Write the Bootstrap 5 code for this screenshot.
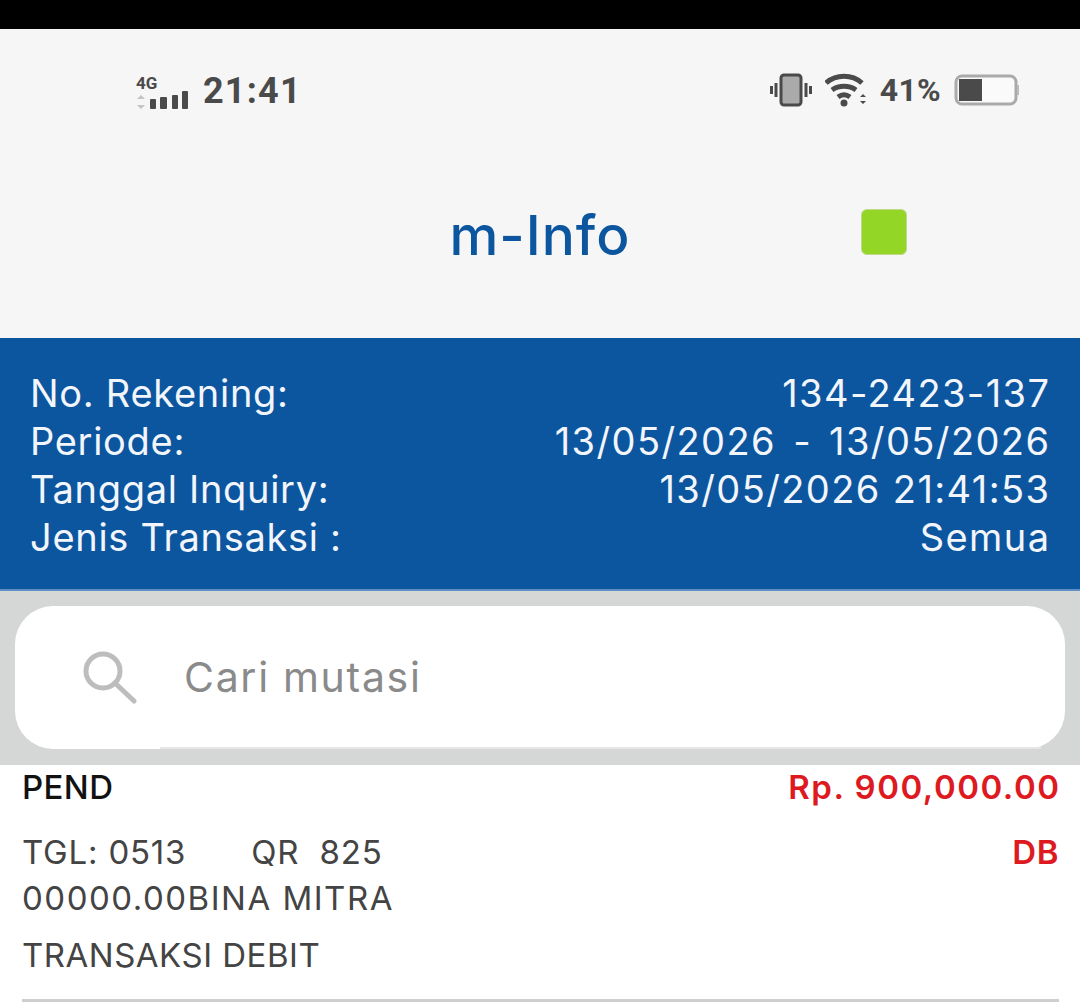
<!DOCTYPE html>
<html lang="id">
<head>
    <meta charset="UTF-8">
    <title>m-Info</title>
    <link href="https://cdn.jsdelivr.net/npm/bootstrap@5.3.2/dist/css/bootstrap.min.css" rel="stylesheet">
    <style>
        html, body { height: 1006px; overflow: hidden; }
        body { background: #fff; font-family: Inter, "Noto Sans", sans-serif; color: #333; }
        .top-strip { height: 29px; background: #000; }
        .app-head { height: 309px; background: #f6f6f6; }
        .status-row { height: 122px; padding: 42px 60px 0 135px; color: #4a4a4a; }
        .status-icons { gap: 13px; }
        .clock { font: 700 36px/38px Roboto, sans-serif; letter-spacing: 1.2px; margin-left: 14px; }
        .pct { font: 700 32px/38px Roboto, sans-serif; letter-spacing: .3px; }
        .net-label { font: 700 17px/17px Roboto, sans-serif; }
        .title-row { height: 168px; display: grid; grid-template-columns: 1fr auto 1fr; align-items: center; }
        .app-title { font: 500 55px/60px Inter, sans-serif; color: #0c569f; letter-spacing: 1px; }
        .green-dot { width: 46px; height: 46px; margin: -6px 0 0 231px; background: #93d626; border-radius: 6px; border: 1px solid #bcd98c; }
        .acct-panel { height: 253px; background: #0c559f; color: #f2f6fb; padding: 31px 31px 0; font-size: 38px; line-height: 48px; border-bottom: 2px solid #5c8fc4; }
        .acct-label { letter-spacing: .7px; margin-left: -1px; }
        .acct-value { letter-spacing: 1.4px; margin-right: -1.4px; }
        .acct-dash { margin: 0 5px; }
        .search-band { height: 174px; background: #d5d6d6; padding: 15px 15px 16px; }
        .search-box { height: 143px; background: #fff; border-radius: 38px; padding-left: 68px; position: relative; }
        .search-box::after { content: ""; position: absolute; left: 145px; right: 24px; bottom: 0; height: 2px; background: #e6e6e6; }
        .search-text { font-size: 41px; color: #8a8a8a; margin-left: 47px; line-height: 1; letter-spacing: 1.7px; }
        .trx-list { padding: 0 21px 0 22px; }
        .trx-top { height: 64px; padding-top: 2px; font-size: 33px; line-height: 40px; }
        .trx-name { color: #111; font-weight: 500; letter-spacing: .4px; }
        .trx-amount { color: #dd1a1f; font-weight: 600; letter-spacing: 1.5px; margin-right: -1.5px; }
        .trx-line { font-size: 33px; line-height: 46px; color: #444; }
        .trx-wide { letter-spacing: 1.5px; }
        .trx-tgl { letter-spacing: .8px; }
        .trx-db { color: #dd1a1f; font-weight: 600; letter-spacing: .6px; }
        .gap-tgl { margin-left: 65px; }
        .trx-note { font-size: 33px; line-height: 46px; color: #444; margin-top: 11px; padding-bottom: 21px; border-bottom: 3px solid #cfcfcf; letter-spacing: .5px; }
    </style>
</head>
<body>

<div class="top-strip"></div>

<!-- status + title -->
<header class="app-head">
    <div class="status-row d-flex justify-content-between align-items-start">
        <div class="d-flex align-items-center">
            <svg width="54" height="40" viewBox="0 -4 54 40" fill="#4a4a4a">
                <text class="net-label" x="1" y="14">4G</text>
                <path d="M6 20l4 4H2z M6 34l4-4H2z" fill="#c4c4c4"/>
                <rect x="15" y="24" width="6" height="10" rx="1"/>
                <rect x="25" y="22" width="7" height="12" rx="1"/>
                <rect x="37" y="20" width="6" height="14" rx="1"/>
                <rect x="47" y="16" width="6" height="18" rx="1"/>
            </svg>
            <span class="clock">21:41</span>
        </div>
        <div class="status-icons d-flex align-items-center">
            <svg width="42" height="34" viewBox="0 0 42 34" fill="none">
                <rect x="11" y="2" width="20" height="30" rx="3" fill="#aaa" stroke="#4a4a4a" stroke-width="3"/>
                <path d="M6 10v14M1.500 13v8M36 10v14M40.500 13v8" stroke="#4a4a4a" stroke-width="3"/>
            </svg>
            <svg width="42" height="34" viewBox="0 0 42 34" fill="none" stroke="#4a4a4a" stroke-width="5">
                <path d="M1 10c10-9 26-9 36 0M7 17c7-5 17-5 24 0M13 24c4-3 8-3 12 0"/>
                <circle cx="19" cy="30" r="3.500" fill="#4a4a4a" stroke="none"/>
                <path d="M38 21l3 3h-6zM38 31l3-3h-6z" fill="#4a4a4a" stroke="none"/>
            </svg>
            <span class="pct">41%</span>
            <svg width="66" height="34" viewBox="0 0 66 34" fill="none">
                <rect x="2" y="3" width="60" height="28" rx="6" fill="#fafafa" stroke="#aaa" stroke-width="3"/>
                <rect x="5" y="6" width="23" height="22" fill="#4a4a4a"/>
                <path d="M64 12v10" stroke="#bbb" stroke-width="2"/>
            </svg>
        </div>
    </div>
    <div class="title-row">
        <div></div>
        <div class="app-title">m-Info</div>
        <div><div class="green-dot"></div></div>
    </div>
</header>

<!-- rekening -->
<section class="acct-panel">
    <div class="d-flex justify-content-between"><span class="acct-label">No. Rekening:</span><span class="acct-value">134-2423-137</span></div>
    <div class="d-flex justify-content-between"><span class="acct-label">Periode:</span><span class="acct-value">13/05/2026 <span class="acct-dash">-</span> 13/05/2026</span></div>
    <div class="d-flex justify-content-between"><span class="acct-label">Tanggal Inquiry:</span><span class="acct-value">13/05/2026 21:41:53</span></div>
    <div class="d-flex justify-content-between"><span class="acct-label">Jenis Transaksi :</span><span class="acct-value">Semua</span></div>
</section>

<!-- cari -->
<div class="search-band">
    <div class="search-box d-flex align-items-center">
        <svg width="54" height="54" viewBox="0 0 54 54" fill="none" stroke="#bdbdbd" stroke-width="5">
            <circle cx="20" cy="20" r="17"/>
            <path d="M32 32l19 18" stroke-linecap="round"/>
        </svg>
        <span class="search-text">Cari mutasi</span>
    </div>
</div>

<!-- mutasi -->
<div class="trx-list">
    <div class="trx-top d-flex justify-content-between">
        <span class="trx-name">PEND</span>
        <span class="trx-amount">Rp. 900,000.00</span>
    </div>
    <div class="trx-line d-flex justify-content-between">
        <span class="trx-tgl">TGL: 0513<span class="gap-tgl">QR&nbsp; 825</span></span>
        <span class="trx-db">DB</span>
    </div>
    <div class="trx-line trx-wide">00000.00BINA MITRA</div>
    <div class="trx-note">TRANSAKSI DEBIT</div>
</div>

<script src="https://cdn.jsdelivr.net/npm/bootstrap@5.3.2/dist/js/bootstrap.bundle.min.js"></script>
</body>
</html>
